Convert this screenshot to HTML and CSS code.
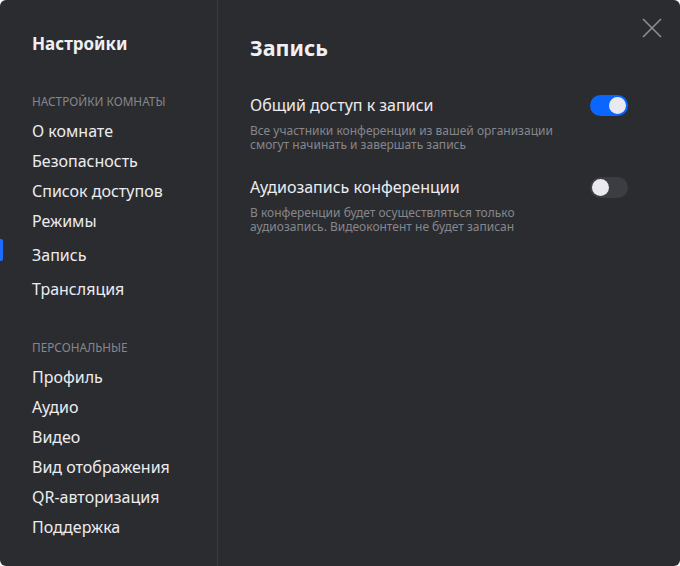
FILE: index.html
```html
<!DOCTYPE html>
<html lang="ru">
<head>
<meta charset="utf-8">
<link rel="stylesheet" href="styles.css">
</head>
<body>
<div class="dialog">
  <aside class="sidebar">
    <h1 class="side-title">Настройки</h1>
    <div class="group-label">Настройки комнаты</div>
    <ul class="menu">
      <li class="item">О комнате</li>
      <li class="item">Безопасность</li>
      <li class="item">Список доступов</li>
      <li class="item">Режимы</li>
      <li class="item tall active">Запись</li>
      <li class="item tall">Трансляция</li>
    </ul>
    <div class="group-label second">Персональные</div>
    <ul class="menu">
      <li class="item">Профиль</li>
      <li class="item">Аудио</li>
      <li class="item">Видео</li>
      <li class="item">Вид отображения</li>
      <li class="item">QR-авторизация</li>
      <li class="item">Поддержка</li>
    </ul>
  </aside>
  <main class="content">
    <h2 class="title">Запись</h2>
    <div class="setting">
      <div class="setting-head">
        <span class="label">Общий доступ к записи</span>
        <span class="toggle on"><span class="knob"></span></span>
      </div>
      <p class="desc"><span class="line">Все участники конференции из вашей организации</span><span class="line">смогут начинать и завершать запись</span></p>
    </div>
    <div class="setting">
      <div class="setting-head">
        <span class="label">Аудиозапись конференции</span>
        <span class="toggle"><span class="knob"></span></span>
      </div>
      <p class="desc"><span class="line">В конференции будет осуществляться только</span><span class="line">аудиозапись. Видеоконтент не будет записан</span></p>
    </div>
    <button class="close" aria-label="Закрыть">
      <svg width="20" height="20" viewBox="0 0 20 20"><path d="M1 1L19 19M19 1L1 19" stroke="#8d8e93" stroke-width="1.6" fill="none"/></svg>
    </button>
  </main>
</div>
</body>
</html>
```

FILE: styles.css
```css
* { box-sizing: border-box; }
html, body { margin: 0; padding: 0; background: #ffffff; }
body { font-family: "Noto Sans", "Open Sans", sans-serif; }
.dialog {
  width: 680px;
  height: 566px;
  background: #2b2c30;
  border-radius: 6px;
  display: flex;
  overflow: hidden;
  color: #ececf0;
}
.sidebar {
  width: 218px;
  border-right: 1px solid #3b3c41;
  padding: 32px 0 0 32px;
  flex-shrink: 0;
}
.side-title {
  margin: 0;
  font-size: 17px;
  font-weight: 700;
  line-height: 24px;
  color: #f0f0f3;
}
.group-label {
  margin-top: 38px;
  font-size: 11.8px;
  line-height: 14px;
  text-transform: uppercase;
  color: #86878c;
}
.group-label.second { margin-top: 34px; }
.menu { list-style: none; margin: 8px 0 0; padding: 0; }
.item {
  font-size: 16px;
  line-height: 30px;
  height: 30px;
  color: #ececf0;
  position: relative;
}
.item.tall { height: 34px; line-height: 34px; }
.item.active { margin-top: 2px; }
.item.active::before {
  content: "";
  position: absolute;
  left: -32px;
  top: 1px;
  width: 3px;
  height: 22px;
  background: #1f6bff;
  border-radius: 0 2px 2px 0;
}
.content {
  flex: 1;
  position: relative;
  padding: 32px 52px 0 32px;
}
.title {
  margin: 0;
  font-size: 21.5px;
  line-height: 32px;
  font-weight: 700;
  color: #f0f0f3;
}
.setting { margin-top: 30px; }
.setting + .setting { margin-top: 24px; }
.setting-head {
  display: flex;
  justify-content: space-between;
  align-items: center;
  height: 22px;
}
.label { font-size: 16px; color: #ececf0; }
.desc {
  margin: 8px 0 0;
  font-size: 12px;
  color: #86878c;
}
.line {
  display: block;
  height: 14px;
  line-height: 14px;
}
.toggle {
  width: 38px;
  height: 21px;
  border-radius: 11px;
  background: #3c3d42;
  padding: 2px;
  display: flex;
  justify-content: flex-start;
}
.toggle.on { background: #0b66ff; justify-content: flex-end; }
.knob {
  width: 17px;
  height: 17px;
  border-radius: 50%;
  background: #e9e9ef;
}
.close {
  position: absolute;
  top: 18px;
  right: 18px;
  width: 20px;
  height: 20px;
  padding: 0;
  border: 0;
  background: none;
  display: block;
}
.close svg { display: block; }
```
